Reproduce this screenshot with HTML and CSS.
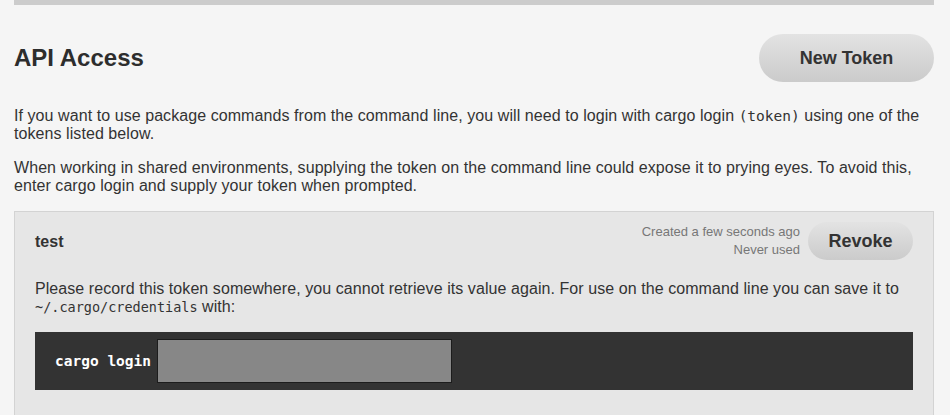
FILE: index.html
```html
<!DOCTYPE html>
<html lang="en">
<head>
<meta charset="utf-8">
<title>API Access</title>
<link rel="stylesheet" href="styles.css">
</head>
<body>
<div class="page">
  <div class="topbar"></div>
  <div class="header">
    <h2 class="title">API Access</h2>
    <button class="btn btn-large" type="button">New Token</button>
  </div>
  <p class="text">If you want to use package commands from the command line, you will need to login with cargo login <code class="code code-lg">(token)</code> using one of the tokens listed below.</p>
  <p class="text">When working in shared environments, supplying the token on the command line could expose it to prying eyes. To avoid this, enter cargo login and supply your token when prompted.</p>
  <div class="card">
    <div class="token-row">
      <div class="token-name">test</div>
      <div class="token-side">
        <div class="meta">
          <div>Created a few seconds ago</div>
          <div>Never used</div>
        </div>
        <button class="btn btn-small" type="button">Revoke</button>
      </div>
    </div>
    <p class="text note">Please record this token somewhere, you cannot retrieve its value again. For use on the command line you can save it to <code class="code">~/.cargo/credentials</code> with:</p>
    <div class="terminal">
      <span class="cmd">cargo login</span>
      <span class="secret"></span>
    </div>
  </div>
</div>
</body>
</html>
```
FILE: styles.css
```css
html, body {
  margin: 0;
  padding: 0;
  background: #f5f5f5;
}

body {
  font-family: "Liberation Sans", Arial, Helvetica, sans-serif;
  color: #333;
  font-size: 16px;
}

.page {
  width: 920px;
  margin-left: 14px;
}

.topbar {
  height: 5px;
  background: #cccccc;
}

.header {
  display: flex;
  justify-content: space-between;
  align-items: center;
  margin-top: 29px;
  margin-bottom: 25px;
}

.title {
  margin: 0;
  font-size: 24px;
  font-weight: bold;
  color: #2d2d2d;
}

.btn {
  font-family: "Liberation Sans", Arial, Helvetica, sans-serif;
  font-weight: bold;
  color: #333;
  border: none;
  border-radius: 999px;
  background: linear-gradient(#e3e3e3, #cbcbcb);
  cursor: pointer;
}

.btn-large {
  height: 48px;
  width: 175px;
  font-size: 18px;
  padding: 0;
}

.btn-small {
  height: 38px;
  width: 105px;
  font-size: 18px;
  padding: 0;
}

.text {
  margin: 0 0 16px;
  line-height: 18px;
  letter-spacing: 0.07px;
}

.code {
  font-family: "DejaVu Sans Mono", "Liberation Mono", monospace;
  font-size: 13.5px;
  letter-spacing: 0;
}

.code-lg {
  font-size: 14.5px;
}

.card {
  margin-top: 14px;
  border: 1px solid #d3d3d3;
  background: #e6e6e6;
  padding: 10px 20px 40px;
}

.token-row {
  display: flex;
  justify-content: space-between;
  align-items: center;
  margin-bottom: 20px;
}

.token-name {
  font-weight: bold;
  font-size: 16px;
  padding-top: 2px;
}

.token-side {
  display: flex;
  align-items: center;
  gap: 8px;
}

.meta {
  text-align: right;
  font-size: 13px;
  line-height: 18px;
  color: #777;
}

.note {
  margin-bottom: 16px;
}

.terminal {
  display: flex;
  align-items: center;
  gap: 6px;
  background: #333;
  padding: 7px 20px;
}

.cmd {
  font-family: "DejaVu Sans Mono", "Liberation Mono", monospace;
  font-weight: bold;
  font-size: 14.5px;
  color: #fff;
}

.secret {
  display: block;
  width: 293px;
  height: 42px;
  background: #878787;
  border: 1px solid #1c1c1c;
}
```
